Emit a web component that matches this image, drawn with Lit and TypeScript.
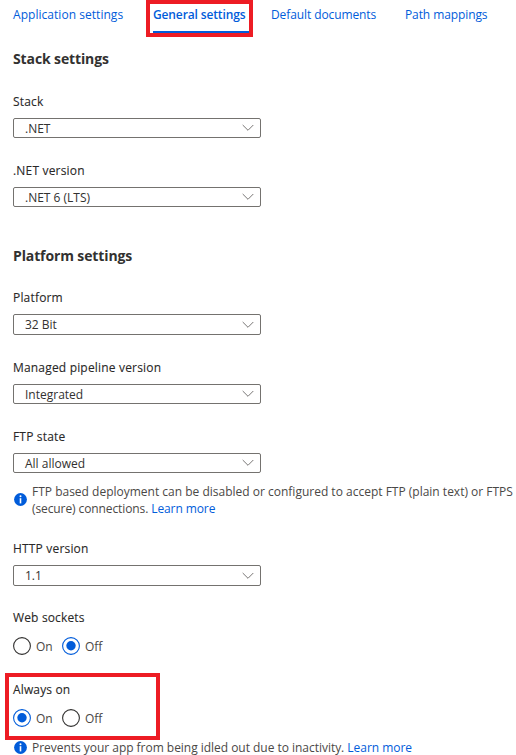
import { LitElement, html, css, svg, nothing } from "lit";
import { customElement, property } from "lit/decorators.js";
import { classMap } from "lit/directives/class-map.js";

@customElement("select-field")
class SelectField extends LitElement {
  @property() label = "";
  @property() value = "";
  @property({ type: Boolean }) tall = false;

  static styles = css`
    :host { display: block; }
    .label { height: 20px; line-height: 20px; margin-bottom: 6px; color: #292827; letter-spacing: 0.18px; -webkit-text-stroke: 0.1px #292827; }
    .box { box-sizing: border-box; width: 248px; height: 20px; border: 1px solid #74726f; border-radius: 2px;
      display: flex; align-items: center; justify-content: space-between; padding: 0 6px 0 11px; color: #323130; }
    .tall { height: 21px; }
    .value { line-height: 18px; padding-top: 1px; letter-spacing: 0; }
    svg { display: block; }
  `;

  render() {
    return html`
      <div class="label">${this.label}</div>
      <div class=${classMap({ box: true, tall: this.tall })}>
        <span class="value">${this.value}</span>
        <svg width="12" height="8" viewBox="0 0 12 8" fill="none" stroke="#696765" stroke-width="0.9">
          <path d="M0.7 1L6 6.3L11.3 1" />
        </svg>
      </div>
    `;
  }
}

@customElement("radio-field")
class RadioField extends LitElement {
  @property() label = "";
  @property() value = "";

  static styles = css`
    :host { display: block; }
    .label { height: 20px; line-height: 20px; margin-bottom: 9px; color: #292827; letter-spacing: 0.15px; -webkit-text-stroke: 0.1px #292827; }
    .options { display: flex; height: 18px; }
    .option { display: flex; align-items: center; width: 49px; gap: 5px; color: #4a4846; }
    .text { line-height: 18px; padding-top: 1px; }
    svg { flex: none; display: block; }
  `;

  render() {
    return html`
      <div class="label">${this.label}</div>
      <div class="options">
        ${["On", "Off"].map((name) => {
          const checked = name === this.value;
          return html`<div class="option">
            <svg width="18" height="18" viewBox="0 0 18 18">
              <circle cx="9" cy="9" r="8.4" fill="#fff" stroke=${checked ? "#015cda" : "#323130"} stroke-width="1.1" />
              ${checked ? svg`<circle cx="9" cy="8.8" r="4.7" fill="#015cda" />` : nothing}
            </svg>
            <span class="text">${name}</span>
          </div>`;
        })}
      </div>
    `;
  }
}

@customElement("info-note")
class InfoNote extends LitElement {
  static styles = css`
    :host { display: flex; align-items: center; gap: 5px; padding-left: 1px; line-height: 17px; color: #4a4846; white-space: nowrap; }
    svg { flex: none; display: block; margin-bottom: 1px; }
  `;

  render() {
    return html`
      <svg width="13" height="13" viewBox="0 0 13 13">
        <circle cx="6.5" cy="6.5" r="6.4" fill="#015cda" />
        <circle cx="6.5" cy="3.2" r="1" fill="#fff" />
        <path d="M6.5 5.2V10.4" stroke="#fff" stroke-width="1.6" />
      </svg>
      <div><slot></slot></div>
    `;
  }
}

@customElement("app-root")
class AppRoot extends LitElement {
  static styles = css`
    :host { display: block; position: relative; box-sizing: border-box; width: 516px; height: 755px; overflow: hidden; background: #fff;
      padding-left: 13px; font-family: "Open Sans", "Noto Sans", sans-serif; font-size: 12px; color: #323130; }
    .tabs { display: grid; grid-template-columns: 140px 118px 134px auto; height: 33px; color: #015cda; white-space: nowrap; }
    .tab { line-height: 20px; padding-top: 5px; letter-spacing: 0.04px; }
    .tight { letter-spacing: -0.1px; }
    .active { box-sizing: border-box; width: 96px; height: 33px; border-bottom: 2px solid #015cda; font-weight: 600; letter-spacing: -0.13px; }
    h2 { margin: 0; height: 20px; line-height: 20px; font-size: 14px; font-weight: 700; letter-spacing: -0.12px; color: #323130; }
    .stack { margin: 16px 0 23px; }
    .platform { margin: 39px 0 22px; }
    .fields { display: grid; gap: 23px; }
    .ftp { margin-top: 10px; }
    .http { margin: 22px 0; }
    .always { margin: 25px 0 12px; }
    .line2 { letter-spacing: -0.1px; }
    .idle { letter-spacing: -0.03px; }
    .link { color: #015cda; }
    .mark { position: absolute; box-sizing: border-box; border: 4px solid #ed1c24; }
    .mark-tab { left: 146px; top: 0; width: 107px; height: 37px; }
    .mark-always { left: 5px; top: 673px; width: 155px; height: 67px; }
  `;

  render() {
    return html`
      <nav class="tabs">
        <span class="tab">Application settings</span>
        <span class="tab active">General settings</span>
        <span class="tab tight">Default documents</span>
        <span class="tab tight">Path mappings</span>
      </nav>
      <h2 class="stack">Stack settings</h2>
      <div class="fields">
        <select-field label="Stack" value=".NET"></select-field>
        <select-field label=".NET version" value=".NET 6 (LTS)"></select-field>
      </div>
      <h2 class="platform">Platform settings</h2>
      <div class="fields">
        <select-field label="Platform" value="32 Bit" tall></select-field>
        <select-field label="Managed pipeline version" value="Integrated"></select-field>
        <select-field label="FTP state" value="All allowed"></select-field>
      </div>
      <info-note class="ftp">
        <div>FTP based deployment can be disabled or configured to accept FTP (plain text) or FTPS</div>
        <div class="line2">(secure) connections. <span class="link">Learn more</span></div>
      </info-note>
      <select-field class="http" label="HTTP version" value="1.1" tall></select-field>
      <radio-field label="Web sockets" value="Off"></radio-field>
      <radio-field class="always" label="Always on" value="On"></radio-field>
      <info-note class="idle">Prevents your app from being idled out due to inactivity. <span class="link">Learn more</span></info-note>
      <div class="mark mark-tab"></div>
      <div class="mark mark-always"></div>
    `;
  }
}
